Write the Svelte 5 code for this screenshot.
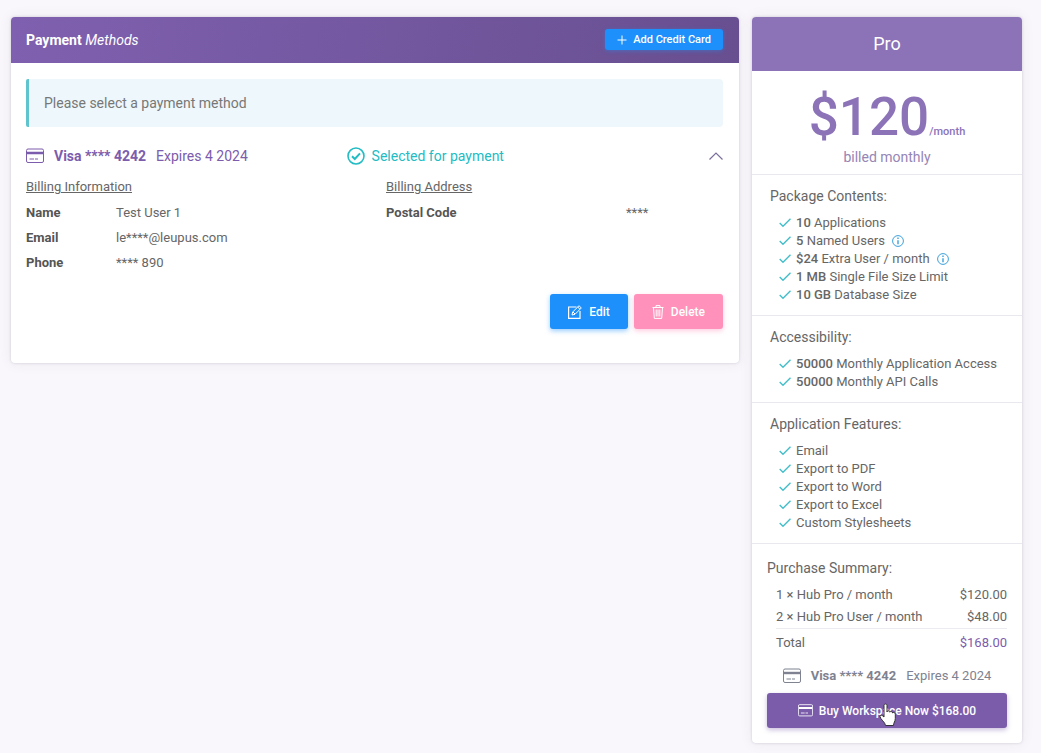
<script lang="ts">
  interface Feature {
    amount?: string;
    text: string;
    info?: boolean;
  }

  interface Section {
    title: string;
    items: Feature[];
  }

  const contact = [
    { label: "Name", value: "Test User 1" },
    { label: "Email", value: "le****@leupus.com" },
    { label: "Phone", value: "**** 890" },
  ];

  const sections: Section[] = [
    {
      title: "Package Contents:",
      items: [
        { amount: "10", text: "Applications" },
        { amount: "5", text: "Named Users", info: true },
        { amount: "$24", text: "Extra User / month", info: true },
        { amount: "1 MB", text: "Single File Size Limit" },
        { amount: "10 GB", text: "Database Size" },
      ],
    },
    {
      title: "Accessibility:",
      items: [
        { amount: "50000", text: "Monthly Application Access" },
        { amount: "50000", text: "Monthly API Calls" },
      ],
    },
    {
      title: "Application Features:",
      items: [
        { text: "Email" },
        { text: "Export to PDF" },
        { text: "Export to Word" },
        { text: "Export to Excel" },
        { text: "Custom Stylesheets" },
      ],
    },
  ];

  const lines = [
    { label: "1 × Hub Pro / month", price: "$120.00" },
    { label: "2 × Hub Pro User / month", price: "$48.00" },
  ];

  let expanded = $state(true);
</script>

{#snippet cardIcon(size: number)}
  <svg width={size} height={size} viewBox="0 0 18 18" fill="none" stroke="currentColor" aria-hidden="true">
    <rect x="0.5" y="2" width="17" height="13.5" rx="1.5" />
    <path d="M1 6h16" stroke-width="2.4" />
    <path d="M3.5 12h4.5M9 12h3" />
  </svg>
{/snippet}

<main class="page">
  <section class="card">
    <header class="methods-header">
      <h2><strong>Payment</strong> <em>Methods</em></h2>
      <button class="add-btn">
        <svg width="10" height="10" viewBox="0 0 10 10" stroke="currentColor" aria-hidden="true">
          <path d="M5 0.5v9M0.5 5h9" />
        </svg>
        Add Credit Card
      </button>
    </header>

    <div class="methods-body">
      <div class="alert">Please select a payment method</div>

      <div class="method-row">
        <div class="method">
          {@render cardIcon(18)}
          <strong>Visa **** 4242</strong>
          <span>Expires 4 2024</span>
        </div>
        <div class="selected">
          <svg width="18" height="18" viewBox="0 0 18 18" fill="none" stroke="currentColor" aria-hidden="true">
            <circle cx="9" cy="9" r="8" stroke-width="1.6" />
            <path d="M5 9.2l2.8 2.8 5.2-5.6" stroke-width="2" />
          </svg>
          Selected for payment
        </div>
        <button class="toggle" aria-label="Toggle details" aria-expanded={expanded} onclick={() => (expanded = !expanded)}>
          <svg class:closed={!expanded} width="14" height="8" viewBox="0 0 14 8" fill="none" stroke="currentColor" aria-hidden="true">
            <path d="M0.5 7.5l6.5-6.5 6.5 6.5" stroke-width="1.2" />
          </svg>
        </button>
      </div>

      {#if expanded}
        <div class="billing">
          <div>
            <h3>Billing Information</h3>
            <dl class="fields">
              {#each contact as field (field.label)}
                <dt>{field.label}</dt>
                <dd>{field.value}</dd>
              {/each}
            </dl>
          </div>
          <div>
            <h3>Billing Address</h3>
            <dl class="fields address">
              <dt>Postal Code</dt>
              <dd>****</dd>
            </dl>
          </div>
        </div>

        <div class="actions">
          <button class="btn edit">
            <svg width="14" height="14" viewBox="0 0 14 14" fill="none" stroke="currentColor" aria-hidden="true">
              <path d="M8.5 2H0.6v11.4h11.4V6" stroke-width="1.2" />
              <path d="M4 10l0.7-3L11 0.7l2.3 2.3L7 9.3zM5 7l2 2M9.7 2l2.3 2.3" />
            </svg>
            Edit
          </button>
          <button class="btn delete">
            <svg width="12" height="14" viewBox="0 0 12 14" fill="none" stroke="currentColor" aria-hidden="true">
              <path d="M0.5 2.5h11M4 2.5V0.6h4v1.9M1.5 2.5l0.8 10.9h7.4l0.8-10.9M4.2 4.5v7M6 4.5v7M7.8 4.5v7" />
            </svg>
            Delete
          </button>
        </div>
      {/if}
    </div>
  </section>

  <aside class="card">
    <h2 class="plan-name">Pro</h2>

    <div class="price">
      <div class="price-line">
        <span class="amount">$120</span><span class="per">/month</span>
      </div>
      <p>billed monthly</p>
    </div>

    {#each sections as section (section.title)}
      <div class="features">
        <h3>{section.title}</h3>
        <ul>
          {#each section.items as item (item.text)}
            <li>
              <svg class="tick" width="12" height="10" viewBox="0 0 12 10" fill="none" stroke="currentColor" aria-hidden="true">
                <path d="M0.7 5l3.3 3.3L11.5 0.7" stroke-width="1.4" />
              </svg>
              <span>{#if item.amount}<b>{item.amount}</b>{" "}{/if}{item.text}</span>
              {#if item.info}
                <svg class="info" width="12" height="12" viewBox="0 0 12 12" fill="none" stroke="currentColor" aria-hidden="true">
                  <circle cx="6" cy="6" r="5.4" />
                  <path d="M6 5.2v4M6 2.6v1.4" stroke-width="1.4" />
                </svg>
              {/if}
            </li>
          {/each}
        </ul>
      </div>
    {/each}

    <div class="summary">
      <h3>Purchase Summary:</h3>
      <table>
        <tbody>
          {#each lines as line (line.label)}
            <tr>
              <td>{line.label}</td>
              <td class="money">{line.price}</td>
            </tr>
          {/each}
        </tbody>
        <tfoot>
          <tr>
            <td>Total</td>
            <td class="money">$168.00</td>
          </tr>
        </tfoot>
      </table>

      <div class="method chosen">
        {@render cardIcon(18)}
        <strong>Visa **** 4242</strong>
        <span>Expires 4 2024</span>
      </div>

      <button class="btn buy">
        {@render cardIcon(15)}
        Buy Workspace Now $168.00
        <svg class="pointer" width="18" height="24" viewBox="0 0 18 24" aria-hidden="true">
          <path
            d="M5 2.5c0-2 3-2 3 0V9c0-1.6 2.8-1.5 2.8 0.2C11 8 13.5 8 13.5 10c0.4-1 2.8-0.8 2.8 1.2v4.3c0 3-1.8 4-1.8 7H6.5c0-3-5.5-6.5-5.5-9 0-1.500 1.8-1.8 2.6-0.7L5 14z"
            fill="#fff"
            stroke="#333"
          />
        </svg>
      </button>
    </div>
  </aside>
</main>

<style>
  :global(body) {
    margin: 0;
    background: #f9f7fb;
  }

  .page {
    display: grid;
    grid-template-columns: minmax(0, 1fr) 270px;
    gap: 13px;
    align-items: start;
    padding: 17px 19px 10px 11px;
    font-family: Roboto, "Liberation Sans", sans-serif;
    font-size: 13px;
    color: #666;
  }

  h2,
  h3,
  p,
  ul,
  dl,
  dd {
    margin: 0;
    padding: 0;
  }

  h3 {
    font-weight: 400;
  }

  button {
    font-family: inherit;
    border: none;
    cursor: pointer;
  }

  svg {
    flex: none;
  }

  .card {
    background: #fff;
    border-radius: 4px;
    overflow: hidden;
    box-shadow: 0 0 3px rgba(60, 50, 90, 0.2), 0 0 14px rgba(80, 60, 110, 0.07);
  }

  .methods-header {
    display: flex;
    align-items: center;
    justify-content: space-between;
    padding: 12px 16px 13px 15px;
    color: #fff;
    background: linear-gradient(100deg, #7f60b0, #684f90);
  }

  .methods-header h2 {
    font-size: 14px;
    font-weight: 400;
    line-height: 20px;
  }

  .methods-header strong {
    font-weight: 700;
  }

  .add-btn {
    display: flex;
    align-items: center;
    gap: 6px;
    height: 21px;
    padding: 0 12px;
    border-radius: 3px;
    color: #fff;
    background: #1d90fb;
    font-size: 11px;
    font-weight: 500;
    box-shadow: 0 1px 4px rgba(29, 144, 251, 0.4);
  }

  .methods-body {
    padding: 16px 16px 34px 15px;
  }

  .alert {
    padding: 0 15px;
    border-left: 3px solid #5fc4cd;
    border-radius: 2px 4px 4px 2px;
    background: #eef7fc;
    font-size: 14px;
    line-height: 48px;
    color: #777;
  }

  .method-row {
    display: grid;
    grid-template-columns: 46% 1fr auto;
    align-items: center;
    margin-top: 19px;
    font-size: 14px;
    line-height: 20px;
  }

  .method {
    display: flex;
    align-items: center;
    gap: 10px;
    color: #7c5cac;
  }

  .selected {
    display: flex;
    align-items: center;
    gap: 7px;
    color: #22bcc4;
  }

  .toggle {
    display: flex;
    padding: 0;
    background: none;
    color: #7d6f9b;
  }

  .closed {
    transform: rotate(180deg);
  }

  .billing {
    display: grid;
    grid-template-columns: 1fr 1fr;
    gap: 23px;
    margin-top: 8px;
  }

  .billing h3 {
    font-size: 13px;
    line-height: 26px;
    text-decoration: underline;
  }

  .fields {
    display: grid;
    grid-template-columns: 90px 1fr;
    line-height: 25px;
  }

  .fields.address {
    grid-template-columns: 240px 1fr;
  }

  .fields dt {
    font-weight: 700;
    color: #555;
  }

  .actions {
    display: flex;
    justify-content: flex-end;
    gap: 6px;
    margin-top: 19px;
  }

  .btn {
    display: flex;
    align-items: center;
    justify-content: center;
    gap: 7px;
    height: 35px;
    padding: 0 18px;
    border-radius: 3px;
    color: #fff;
    font-size: 12px;
    font-weight: 500;
  }

  .edit {
    background: #1d90fb;
    box-shadow: 0 2px 5px rgba(29, 144, 251, 0.45);
  }

  .delete {
    background: #ff91bb;
    box-shadow: 0 2px 5px rgba(255, 145, 187, 0.45);
  }

  .plan-name {
    color: #fff;
    background: #8c73b8;
    font-size: 18px;
    font-weight: 400;
    line-height: 54px;
    text-align: center;
  }

  .price {
    padding: 16px 0 7px;
    text-align: center;
    color: #8c73b8;
  }

  .price-line {
    display: flex;
    align-items: baseline;
    justify-content: center;
    line-height: 60px;
  }

  .amount {
    font-size: 53px;
    font-weight: 500;
  }

  .per {
    font-size: 11px;
    line-height: 20px;
    font-weight: 500;
  }

  .price p {
    font-size: 14px;
    line-height: 20px;
    color: #9585b5;
  }

  .features {
    padding: 11px 18px;
    border-top: 1px solid #e9e8ee;
  }

  .features h3,
  .summary h3 {
    font-size: 14px;
    line-height: 20px;
  }

  .features ul {
    margin-top: 8px;
    padding: 0 0 0 9px;
    list-style: none;
  }

  .features li {
    display: flex;
    align-items: center;
    line-height: 18px;
  }

  .features b {
    font-weight: 500;
  }

  .tick {
    margin-right: 5px;
    color: #43bfca;
  }

  .info {
    margin-left: 7px;
    color: #3ba0dc;
  }

  .summary {
    padding: 14px 15px 15px;
    border-top: 1px solid #e9e8ee;
  }

  .summary table {
    width: calc(100% - 9px);
    margin: 6px 0 0 9px;
    border-collapse: collapse;
  }

  .summary td {
    padding: 0;
    line-height: 22px;
  }

  .summary .money {
    text-align: right;
  }

  .summary tfoot td {
    padding-top: 3px;
    border-top: 1px solid #ececf0;
  }

  .summary tfoot .money {
    color: #7c5cac;
  }

  .method.chosen {
    justify-content: center;
    margin-top: 12px;
    line-height: 20px;
    color: #7f8290;
  }

  .btn.buy {
    position: relative;
    gap: 6px;
    width: 100%;
    margin-top: 7px;
    background: #7b5cab;
    box-shadow: 0 2px 5px rgba(123, 92, 171, 0.4);
  }

  .pointer {
    position: absolute;
    top: 10px;
    left: 112px;
  }
</style>
